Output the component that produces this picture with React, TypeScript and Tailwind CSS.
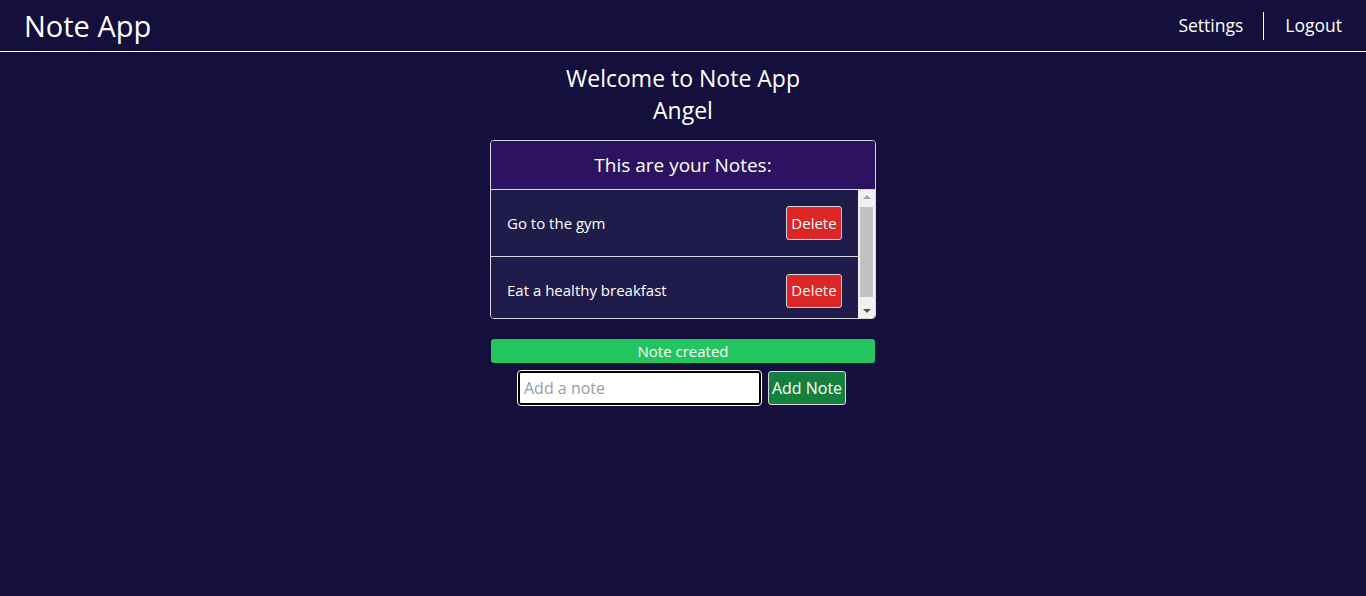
import React from "react";

const notes = ["Go to the gym", "Eat a healthy breakfast"];

function FakeScrollbar() {
  return (
    <div className="flex w-[17px] shrink-0 flex-col items-center bg-[#f1f1f1] py-[5px]">
      <div className="h-0 w-0 border-x-[4px] border-b-[4px] border-x-transparent border-b-[#a3a3a3]" />
      <div className="mt-[8px] h-[90px] w-[13px] bg-[#c1c1c1]" />
      <div className="flex-1" />
      <div className="h-0 w-0 border-x-[4px] border-t-[4px] border-x-transparent border-t-[#505050]" />
    </div>
  );
}

export default function App() {
  return (
    <div className="min-h-[596px] bg-[#140f3d] font-['Open_Sans',sans-serif] text-white">
      <header className="flex h-[52px] items-center justify-between border-b border-white pl-[24px] pr-[24px]">
        <h1 className="text-[29px] leading-none">Note App</h1>
        <nav className="flex items-center text-[17.5px]">
          <span className="pr-[20px]">Settings</span>
          <span className="h-[28px] w-px bg-white" />
          <span className="pl-[21px]">Logout</span>
        </nav>
      </header>

      <main className="flex flex-col items-center">
        <div className="mt-[10px] text-center text-[23px] leading-[32px]">
          <p>Welcome to Note App</p>
          <p>Angel</p>
        </div>

        <section className="mt-[14px] w-[386px] overflow-hidden rounded-[4px] border border-[#d8d8e0]">
          <div className="flex h-[49px] items-center justify-center border-b border-[#d8d8e0] bg-[#2e1262] text-[19px]">
            This are your Notes:
          </div>
          <div className="flex h-[128px] bg-[#1f1b4b]">
            <ul className="min-w-0 flex-1 overflow-hidden">
              {notes.map((note, i) => (
                <li
                  key={note}
                  className={`flex h-[67px] items-center justify-between pl-[16px] pr-[16px] text-[15px] ${
                    i === 0 ? "border-b border-[#d8d8e0]" : ""
                  }`}
                >
                  <span>{note}</span>
                  <button
                    type="button"
                    className="h-[34px] w-[56px] rounded-[3px] border border-[#d8d8e0] bg-[#dc2626] text-[15px]"
                  >
                    Delete
                  </button>
                </li>
              ))}
            </ul>
            <FakeScrollbar />
          </div>
        </section>

        <div className="mt-[20px] flex h-[24px] w-[384px] items-center justify-center rounded-[3px] bg-[#22c55e] text-[15px]">
          Note created
        </div>

        <div className="mt-[8px] flex items-center gap-[7px] pr-[2px]">
          <input
            placeholder="Add a note"
            className="h-[34px] w-[243px] rounded-[3px] border-2 border-black bg-white px-[4px] text-[16px] text-black outline outline-1 outline-white placeholder:text-[#9b9ba6]"
          />
          <button
            type="button"
            className="h-[34px] w-[78px] rounded-[3px] border border-[#d8d8e0] bg-[#15803d] text-[16px]"
          >
            Add Note
          </button>
        </div>
      </main>
    </div>
  );
}
